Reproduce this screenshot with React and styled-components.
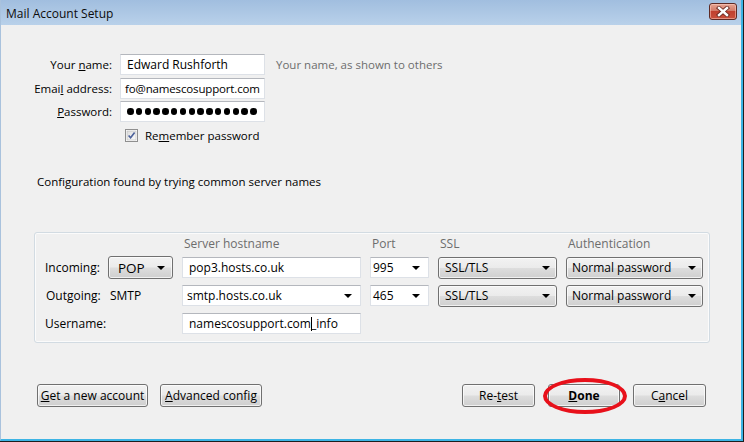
import React from 'react';
import styled, { createGlobalStyle } from 'styled-components';

const GlobalStyle = createGlobalStyle`
  html, body {
    margin: 0;
    padding: 0;
    background: #1e1e1e;
  }
  body {
    font-family: "Open Sans", "Noto Sans", sans-serif;
    font-size: 11.5px;
    color: #000;
  }
`;

const Frame = styled.div`
  width: 744px;
  height: 442px;
  box-sizing: border-box;
  padding: 0 1px 1px 0;
`;

const Window = styled.div`
  height: 100%;
  box-sizing: border-box;
  display: flex;
  flex-direction: column;
  background: #f0f0f0;
  border-left: 1px solid #a9c2dd;
  border-right: 2px solid #3db4e4;
  border-bottom: 2px solid #3db4e4;
`;

const TitleBar = styled.div`
  height: 25px;
  flex: none;
  display: flex;
  align-items: center;
  justify-content: space-between;
  padding: 0 4px 0 5px;
  background: linear-gradient(#a1bedf, #b9d1ea);
`;

const Title = styled.div`
  font-size: 12px;
  color: #0c0c0c;
  padding-top: 1px;
`;

const CloseButton = styled.div`
  width: 28px;
  height: 17px;
  margin-top: -3px;
  box-sizing: border-box;
  display: flex;
  align-items: center;
  justify-content: center;
  border: 1px solid #5e2a24;
  border-radius: 3px;
  background: linear-gradient(#e6a492 0%, #d27a68 45%, #c0402f 50%, #c9503b 100%);
  box-shadow: inset 0 0 0 1px rgba(255, 210, 200, 0.5);
`;

const Body = styled.div`
  flex: 1;
  display: flex;
  flex-direction: column;
  padding: 29px 31px 0 33px;
`;

const Form = styled.div`
  display: grid;
  grid-template-columns: 78px 145px auto;
  grid-auto-rows: 21px;
  column-gap: 8px;
  row-gap: 2.5px;
  align-items: center;
`;

const Label = styled.label`
  justify-self: end;
  white-space: nowrap;
`;

const TextBox = styled.div`
  height: ${(p) => p.$h || 21}px;
  box-sizing: border-box;
  display: flex;
  align-items: center;
  padding: 0 ${(p) => p.$pad ?? 6}px;
  background: #fff;
  border: 1px solid #dde1e7;
  border-top-color: #b4b7bd;
  white-space: nowrap;
  overflow: hidden;
  font-size: ${(p) => p.$size || 12}px;
  letter-spacing: ${(p) => p.$track || 0}px;
`;

const Dot = styled.span`
  flex: none;
  width: 6.5px;
  height: 6.5px;
  margin-right: 2.3px;
  border-radius: 50%;
  background: #000;
`;

const Hint = styled.span`
  color: #6d6d6d;
  padding-left: 3px;
  white-space: nowrap;
`;

const CheckRow = styled.div`
  grid-column: 2 / 4;
  display: flex;
  align-items: center;
  gap: 7px;
  padding-left: 5px;
`;

const Note = styled.div`
  margin-top: 28px;
  padding-left: 3px;
  line-height: 16px;
`;

const Group = styled.div`
  margin-top: 42px;
  padding: 0 7px 7px 10px;
  border: 1px solid #d2dbe2;
  border-radius: 3px;
  box-shadow: inset 0 0 0 1px #fbfbfb;
  display: grid;
  grid-template-columns: 54px 65px 179px 59px 119px 137px;
  grid-template-rows: 18px 22px 22px 22px;
  column-gap: 9px;
  row-gap: 6px;
  align-items: center;
`;

const Head = styled.div`
  grid-column: ${(p) => p.$col};
  color: #6d6d6d;
  padding: 3px 0 0 2px;
  font-size: 12px;
`;

const RowLabel = styled.div`
  white-space: nowrap;
  font-size: 12px;
  padding-left: ${(p) => p.$pad || 0}px;
`;

const Plain = styled.div`
  padding-left: 2px;
  font-size: 12px;
`;

const Arrow = styled.span`
  flex: none;
  width: 0;
  height: 0;
  border-left: 4px solid transparent;
  border-right: 4px solid transparent;
  border-top: 4px solid #000;
`;

const Combo = styled.div`
  height: 21px;
  box-sizing: border-box;
  display: flex;
  align-items: center;
  justify-content: space-between;
  padding: 0 ${(p) => p.$right || 8}px 0 ${(p) => p.$left || 4}px;
  background: #fff;
  border: 1px solid #dde1e7;
  border-top-color: #b4b7bd;
  font-size: 12px;
  white-space: nowrap;
`;

const DropButton = styled.div`
  height: ${(p) => p.$h || 22}px;
  box-sizing: border-box;
  display: flex;
  align-items: center;
  justify-content: space-between;
  padding: 0 ${(p) => p.$right || 6}px 0 ${(p) => p.$left || 5}px;
  border: 1px solid #707070;
  border-radius: 3px;
  background: linear-gradient(#f2f2f2 0%, #ebebeb 48%, #dddddd 52%, #cfcfcf 100%);
  box-shadow: inset 0 0 0 1px rgba(255, 255, 255, 0.7);
  font-size: ${(p) => p.$size || 12}px;
  white-space: nowrap;
`;

const Caret = styled.span`
  display: inline-block;
  width: 1px;
  height: 14px;
  background: #000;
  margin: 0 -1px 0 0;
  vertical-align: middle;
`;

const ButtonRow = styled.div`
  margin-top: 41px;
  display: flex;
  justify-content: space-between;
  padding: 0 4px 0 3px;
`;

const ButtonGroup = styled.div`
  display: flex;
  gap: ${(p) => p.$gap}px;
`;

const Button = styled.div`
  position: relative;
  width: ${(p) => p.$w}px;
  height: 23px;
  box-sizing: border-box;
  display: flex;
  align-items: center;
  justify-content: center;
  border: 1px solid #707070;
  border-radius: 3px;
  background: linear-gradient(#f2f2f2 0%, #ebebeb 48%, #dddddd 52%, #cfcfcf 100%);
  box-shadow: inset 0 0 0 1px rgba(255, 255, 255, 0.7);
  font-size: 12px;
  font-weight: ${(p) => (p.$bold ? 700 : 400)};
  white-space: nowrap;
`;

const Ring = styled.div`
  position: absolute;
  left: -6px;
  top: -7px;
  width: 84px;
  height: 36px;
  box-sizing: border-box;
  border: 4px solid #e8101a;
  border-radius: 50%;
  pointer-events: none;
`;

const CheckIcon = () => (
  <svg width="13" height="13" viewBox="0 0 13 13">
    <defs>
      <linearGradient id="cb" x1="0" y1="0" x2="1" y2="1">
        <stop offset="0" stopColor="#dcdcdc" />
        <stop offset="1" stopColor="#fbfbfb" />
      </linearGradient>
    </defs>
    <rect x="0.5" y="0.5" width="12" height="12" fill="#fff" stroke="#8f8f8f" />
    <rect x="2" y="2" width="9" height="9" fill="url(#cb)" stroke="#b9b9b9" strokeWidth="0.6" />
    <path d="M3.6 6.4 L5.6 8.8 L9.6 3.4" fill="none" stroke="#4b609a" strokeWidth="1.6" />
  </svg>
);

const CloseGlyph = () => (
  <svg width="14" height="11" viewBox="0 0 14 11">
    <path d="M3 2 L11 9 M11 2 L3 9" stroke="#6b2a22" strokeWidth="4.2" strokeLinecap="square" />
    <path d="M3 2 L11 9 M11 2 L3 9" stroke="#fff" strokeWidth="2.4" strokeLinecap="square" />
  </svg>
);

const App = () => {
  const dots = Array.from({ length: 15 }, (_, i) => <Dot key={i} />);
  return (
    <Frame>
      <GlobalStyle />
      <Window>
        <TitleBar>
          <Title>Mail Account Setup</Title>
          <CloseButton>
            <CloseGlyph />
          </CloseButton>
        </TitleBar>
        <Body>
          <Form>
            <Label>
              Your <u>n</u>ame:
            </Label>
            <TextBox>Edward Rushforth</TextBox>
            <Hint>Your name, as shown to others</Hint>
            <Label>
              Emai<u>l</u> address:
            </Label>
            <TextBox $pad={4} $size={11.5} $track={-0.15}>
              fo@namescosupport.com
            </TextBox>
            <span />
            <Label>
              <u>P</u>assword:
            </Label>
            <TextBox>{dots}</TextBox>
            <span />
            <span />
            <CheckRow>
              <CheckIcon />
              <span>
                Re<u>m</u>ember password
              </span>
            </CheckRow>
          </Form>

          <Note>Configuration found by trying common server names</Note>

          <Group>
            <Head $col={3}>Server hostname</Head>
            <Head $col={4}>Port</Head>
            <Head $col={5}>SSL</Head>
            <Head $col={6}>Authentication</Head>

            <RowLabel>Incoming:</RowLabel>
            <DropButton $h={23} $left={9} $right={7} $size={13.5}>
              POP <Arrow />
            </DropButton>
            <TextBox $h={21}>pop3.hosts.co.uk</TextBox>
            <Combo $left={2}>
              995 <Arrow />
            </Combo>
            <DropButton $left={6}>
              SSL/TLS <Arrow />
            </DropButton>
            <DropButton $left={5}>
              Normal password <Arrow />
            </DropButton>

            <RowLabel $pad={1}>Outgoing:</RowLabel>
            <Plain>SMTP</Plain>
            <Combo>
              smtp.hosts.co.uk <Arrow />
            </Combo>
            <Combo $left={2}>
              465 <Arrow />
            </Combo>
            <DropButton $left={6}>
              SSL/TLS <Arrow />
            </DropButton>
            <DropButton $left={5}>
              Normal password <Arrow />
            </DropButton>

            <RowLabel>Username:</RowLabel>
            <span />
            <TextBox>
              namescosupport.com
              <Caret />
              _info
            </TextBox>
          </Group>

          <ButtonRow>
            <ButtonGroup $gap={12}>
              <Button $w={111}>
                <span>
                  <u>G</u>et a new account
                </span>
              </Button>
              <Button $w={102}>
                <span>
                  <u>A</u>dvanced config
                </span>
              </Button>
            </ButtonGroup>
            <ButtonGroup $gap={13}>
              <Button $w={73}>
                <span>
                  Re-<u>t</u>est
                </span>
              </Button>
              <Button $w={72} $bold>
                <span>
                  <u>D</u>one
                </span>
                <Ring />
              </Button>
              <Button $w={73}>
                <span>
                  C<u>a</u>ncel
                </span>
              </Button>
            </ButtonGroup>
          </ButtonRow>
        </Body>
      </Window>
    </Frame>
  );
};

export default App;
